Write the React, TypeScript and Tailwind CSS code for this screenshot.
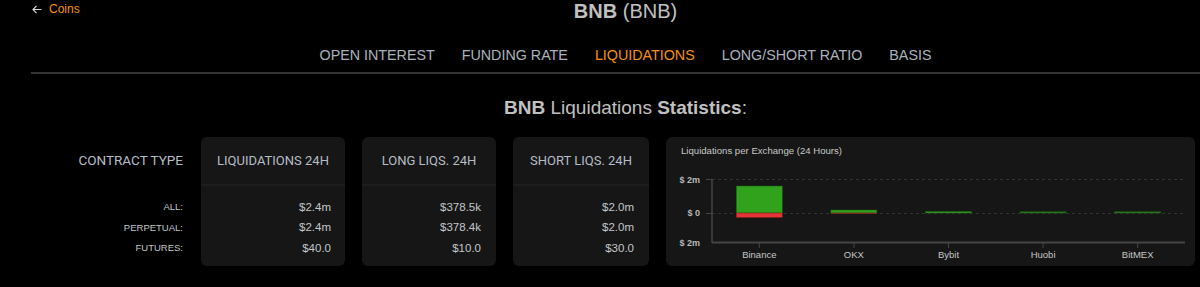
import React from 'react'

const tabs = ['OPEN INTEREST', 'FUNDING RATE', 'LIQUIDATIONS', 'LONG/SHORT RATIO', 'BASIS']

const rows = ['ALL:', 'PERPETUAL:', 'FUTURES:']

const cards = [
  { title: 'LIQUIDATIONS 24H', w: 'w-[144px]', pr: 'pr-[14px]', values: ['$2.4m', '$2.4m', '$40.0'] },
  { title: 'LONG LIQS. 24H', w: 'w-[134px]', pr: 'pr-[15px]', values: ['$378.5k', '$378.4k', '$10.0'] },
  { title: 'SHORT LIQS. 24H', w: 'w-[136px]', pr: 'pr-[15px]', values: ['$2.0m', '$2.0m', '$30.0'] },
]

const exchanges = [
  { name: 'Binance', long: 27, short: 4.5 },
  { name: 'OKX', long: 3, short: 0.5 },
  { name: 'Bybit', long: 1.5, short: 0 },
  { name: 'Huobi', long: 1.2, short: 0 },
  { name: 'BitMEX', long: 1.2, short: 0 },
]

function StatCard({ title, w, pr, values }: { title: string; w: string; pr: string; values: string[] }) {
  return (
    <div className={`${w} h-[129px] shrink-0 rounded-[6px] bg-[#161616] flex flex-col`}>
      <div className="h-[49px] flex items-center justify-center font-['Roboto',sans-serif] text-[13px] text-[#b5bdc6] border-b-2 border-[#1d1d1d]">
        {title}
      </div>
      <div className={`pt-[11px] ${pr} flex flex-col font-['Liberation_Sans',Arial,sans-serif] text-[11.5px] text-[#c3c6ca]`}>
        {values.map((v, i) => (
          <div key={i} className="h-[20.5px] flex items-center justify-end">{v}</div>
        ))}
      </div>
    </div>
  )
}

function ExchangeChart() {
  const left = 46
  const right = 519
  const zero = 76
  const step = (right - left) / exchanges.length
  return (
    <div className="w-[529px] h-[129px] shrink-0 rounded-[6px] bg-[#161616] flex flex-col">
      <div className="pl-[15px] pt-[7px] h-[20px] font-['Liberation_Sans',Arial,sans-serif] text-[9.6px] text-[#c8c8c8]">
        Liquidations per Exchange (24 Hours)
      </div>
      <svg width="529" height="109" viewBox="0 20 529 109" className="block">
        <line x1={left} y1={42.5} x2={right} y2={42.5} stroke="#333" strokeDasharray="3 3" />
        <line x1={left} y1={zero + 0.5} x2={right} y2={zero + 0.5} stroke="#333" strokeDasharray="3 3" />
        <line x1={left} y1={42} x2={left} y2={106} stroke="#444" strokeWidth="1.5" />
        <line x1={left} y1={105.5} x2={right} y2={105.5} stroke="#444" strokeWidth="2" />
        <line x1={40} y1={42.5} x2={left} y2={42.5} stroke="#444" />
        <line x1={40} y1={zero + 0.5} x2={left} y2={zero + 0.5} stroke="#444" />
        <g fontFamily="'Liberation Sans', Arial, sans-serif" fontSize="9" fontWeight="bold" fill="#b9b9b9" textAnchor="end">
          <text x={34} y={46}>$ 2m</text>
          <text x={34} y={79}>$ 0</text>
          <text x={34} y={109}>$ 2m</text>
        </g>
        {exchanges.map((e, i) => {
          const cx = left + step * (i + 0.5)
          const x = cx - 23
          return (
            <g key={e.name}>
              <rect x={x} y={zero - e.long} width={46} height={e.long} fill={i > 2 ? '#27841a' : '#30a21c'} stroke="#1f5d14" strokeWidth="0.5" />
              {e.short > 0 && <rect x={x} y={zero} width={46} height={e.short} fill="#e53535" stroke="#7a1c1c" strokeWidth="0.5" />}
              <line x1={cx} y1={106} x2={cx} y2={111} stroke="#444" />
              <text x={cx} y={120.5} textAnchor="middle" fontFamily="'Liberation Sans', Arial, sans-serif" fontSize="9.5" fill="#c6c6c6">
                {e.name}
              </text>
            </g>
          )
        })}
      </svg>
    </div>
  )
}

export default function App() {
  return (
    <div className="w-[1200px] h-[287px] overflow-hidden bg-black font-['Liberation_Sans',Arial,sans-serif]">
      <div className="ml-[31px] w-[1189px]">
        <div className="grid grid-cols-[1fr_auto_1fr] h-[22px]">
          <div className="flex items-start pt-[3px] pl-[1px] gap-[7px] text-[12px] text-[#f5900e] leading-[13px]">
            <svg width="10" height="9" viewBox="0 0 10 9" className="mt-[2px]">
              <path d="M4.5 0.8 L1 4.5 L4.5 8.2 M1 4.5 H9.5" fill="none" stroke="#d8d8d8" strokeWidth="1.2" />
            </svg>
            <span>Coins</span>
          </div>
          <div className="text-[20px] leading-[22px] text-[#c0c0c0]">
            <span className="font-bold">BNB</span> (BNB)
          </div>
          <div />
        </div>
        <nav className="mt-[25px] pb-[9px] flex justify-center gap-[27px] text-[14.3px] leading-[16px] text-[#aab3bd] border-b-2 border-[#333]">
          {tabs.map(t => (
            <span key={t} className={t === 'LIQUIDATIONS' ? 'text-[#f5900e]' : ''}>{t}</span>
          ))}
        </nav>
        <h2 className="mt-[23px] text-center text-[19px] leading-[22px] text-[#c0c0c0]">
          <span className="font-bold">BNB</span> Liquidations <span className="font-bold">Statistics</span>:
        </h2>
        <div className="mt-[18px] flex">
          <div className="w-[152px] shrink-0 flex flex-col">
            <div className="h-[49px] flex items-center justify-end font-['Roboto',sans-serif] text-[13.5px] text-[#b5bdc6] border-b-2 border-transparent">
              CONTRACT TYPE
            </div>
            <div className="pt-[11px] flex flex-col font-['Liberation_Sans',Arial,sans-serif] text-[9.5px] text-[#c3c6ca]">
              {rows.map(r => (
                <div key={r} className="h-[20.5px] flex items-center justify-end">{r}</div>
              ))}
            </div>
          </div>
          <div className="ml-[18px] flex gap-[17px]">
            {cards.map(c => (
              <StatCard key={c.title} {...c} />
            ))}
            <ExchangeChart />
          </div>
        </div>
      </div>
    </div>
  )
}
